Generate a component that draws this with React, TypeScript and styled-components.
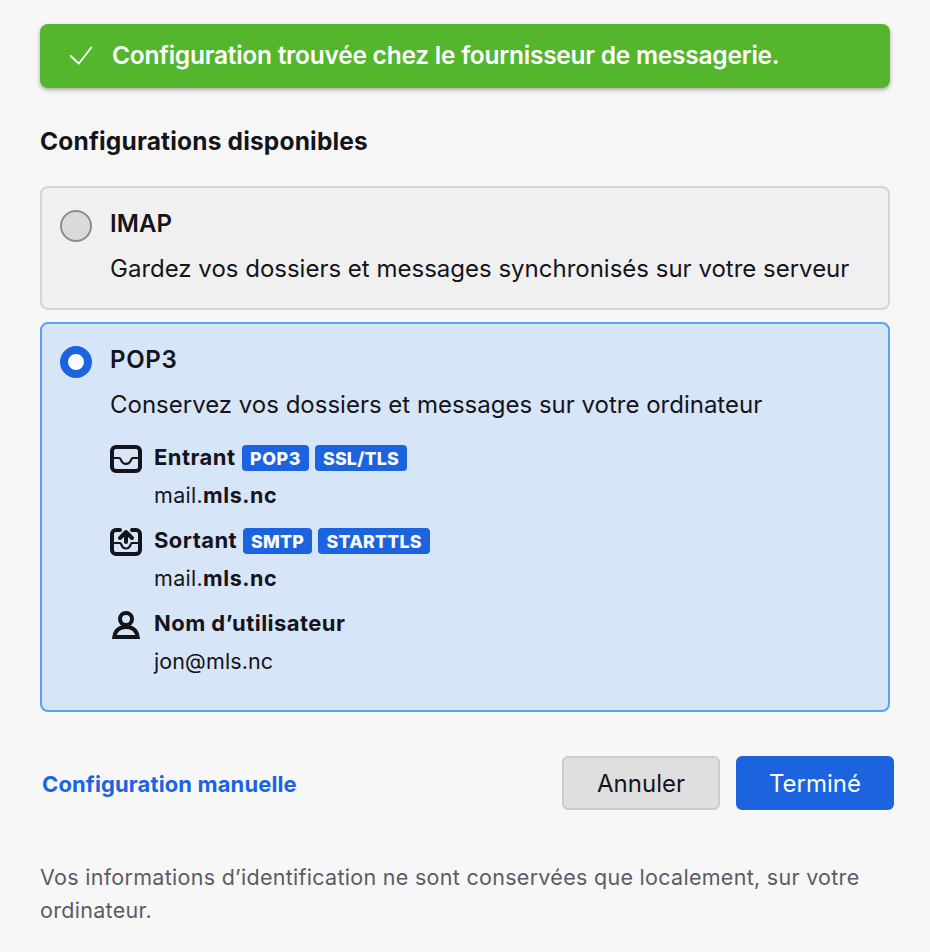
import React from "react";
import styled, { createGlobalStyle } from "styled-components";

const GlobalStyle = createGlobalStyle`
  * { box-sizing: border-box; }
  body {
    margin: 0;
    background: #f7f7f7;
    color: #15141a;
    font-family: Inter, "Liberation Sans", sans-serif;
  }
`;

const Page = styled.main`
  min-height: 952px;
  padding: 24px 36px 0 40px;
  overflow: hidden;
`;

const Notice = styled.div`
  display: flex;
  align-items: center;
  width: 850px;
  height: 64px;
  padding: 0 28px 2px;
  gap: 17px;
  border-radius: 8px;
  background: #54b62d;
  color: #fff;
  box-shadow: 0 2px 4px rgba(0, 0, 0, 0.32);
  font-size: 24.5px;
  font-weight: 600;
  line-height: 30px;
  letter-spacing: -0.24px;
  white-space: nowrap;
`;

const NoticeIcon = styled.svg`
  flex: none;
  width: 27px;
  height: 27px;
`;

const Heading = styled.h1`
  margin: 36px 0 27px;
  font-size: 24.5px;
  font-weight: 700;
  line-height: 35px;
  letter-spacing: 0.17px;
`;

const OptionList = styled.div`
  display: flex;
  flex-direction: column;
  gap: 12px;
  width: 850px;
`;

const Option = styled.section<{ $selected?: boolean }>`
  display: flex;
  gap: 18px;
  height: ${(p) => (p.$selected ? 390 : 124)}px;
  padding: 13px 18px;
  border: 2px solid ${(p) => (p.$selected ? "#56a2fb" : "#d4d4da")};
  border-radius: 8px;
  background: ${(p) => (p.$selected ? "#d7e5f8" : "#f0f0f0")};
`;

const Radio = styled.span<{ $checked?: boolean }>`
  flex: none;
  width: 32px;
  height: 32px;
  margin-top: 9px;
  border-radius: 50%;
  border: ${(p) => (p.$checked ? "8px solid #1c64df" : "2px solid #8c8c8c")};
  background: ${(p) => (p.$checked ? "#fbfbfe" : "#dadada")};
`;

const OptionTitle = styled.h2<{ $tracking?: number }>`
  margin: 0;
  font-size: 24px;
  font-weight: 600;
  line-height: 45px;
  letter-spacing: ${(p) => p.$tracking ?? 0.1}px;
`;

const OptionText = styled.p`
  margin: 0;
  font-size: 24px;
  line-height: 45px;
  white-space: nowrap;
`;

const Details = styled.dl`
  display: grid;
  gap: 7px;
  margin: 11px 0 0;
`;

const Detail = styled.div`
  display: grid;
  grid-template-columns: 32px auto;
  column-gap: 12px;
  grid-template-rows: 38px 38px;
  align-items: center;
  justify-content: start;
`;

const DetailIcon = styled.svg`
  width: 32px;
  height: 32px;
  margin-top: 3px;
  color: #15141a;
`;

const DetailTitle = styled.dt`
  display: flex;
  align-items: center;
  gap: 6px;
  font-size: 22px;
  font-weight: 700;
  line-height: 38px;
  letter-spacing: 0.45px;
`;

const DetailLabel = styled.span`
  min-width: 82px;
`;

const DetailValue = styled.dd`
  grid-column: 2;
  margin: 0;
  font-size: 21.5px;
  line-height: 38px;
  letter-spacing: 0.1px;
`;

const Domain = styled.strong`
  font-weight: 700;
  letter-spacing: 0.6px;
`;

const Server = styled.span`
  letter-spacing: 0.3px;
`;

const Badge = styled.span<{ $width: number; $tracking: number }>`
  width: ${(p) => p.$width}px;
  height: 26px;
  margin-top: 1px;
  border-radius: 4px;
  background: #1c64df;
  color: #fbfbfe;
  font-size: 17.8px;
  font-weight: 800;
  line-height: 27px;
  text-align: center;
  letter-spacing: ${(p) => p.$tracking}px;
`;

const Footer = styled.footer`
  display: flex;
  align-items: center;
  gap: 16px;
  margin-top: 44px;
`;

const ManualLink = styled.a`
  margin: 2px auto 0 2px;
  color: #1c64df;
  font-size: 22px;
  font-weight: 650;
  letter-spacing: 0.12px;
`;

const Button = styled.button<{ $primary?: boolean }>`
  width: 158px;
  height: 54px;
  padding: 0;
  border: 2px solid ${(p) => (p.$primary ? "#1c64df" : "#cbcbcb")};
  border-radius: 6px;
  background: ${(p) => (p.$primary ? "#1c64df" : "#dfdfdf")};
  color: ${(p) => (p.$primary ? "#fbfbfe" : "#15141a")};
  font-family: inherit;
  font-size: 24px;
  letter-spacing: 0;
`;

const Privacy = styled.p`
  width: 850px;
  margin: 51px 0 0;
  color: #5b5b66;
  font-size: 21.5px;
  line-height: 33px;
  letter-spacing: 0.29px;
`;

const InboxIcon = () => (
  <DetailIcon viewBox="0 0 32 32" fill="none" stroke="currentColor">
    <rect x="2" y="4" width="28" height="24" rx="4" strokeWidth="4" />
    <path d="M2 15h7.500c2 0 .8 5.800 6.500 5.800s4.500-5.800 6.500-5.800H30" strokeWidth="2.200" />
  </DetailIcon>
);

const OutboxIcon = () => (
  <DetailIcon viewBox="0 0 32 32" fill="none" stroke="currentColor">
    <path
      d="M10 4H6a4 4 0 0 0-4 4v16a4 4 0 0 0 4 4h20a4 4 0 0 0 4-4V8a4 4 0 0 0-4-4H22"
      strokeWidth="4"
      strokeLinecap="round"
    />
    <path d="M2 17h8c1.800 0 .8 5.500 6 5.500s4.200-5.500 6-5.500h8" strokeWidth="2.200" />
    <path d="M16 16V6M10 12l6-6 6 6" strokeWidth="4" strokeLinecap="round" strokeLinejoin="round" />
  </DetailIcon>
);

const UserIcon = () => (
  <DetailIcon viewBox="0 0 32 32" fill="none" stroke="currentColor" strokeWidth="4">
    <circle cx="16" cy="10" r="6" />
    <path d="M4.300 28C5.300 21.500 9.500 18 16 18S26.700 21.500 27.700 28Z" />
  </DetailIcon>
);

export default function App() {
  return (
    <>
      <GlobalStyle />
      <Page>
        <Notice>
          <NoticeIcon viewBox="0 0 27 27" fill="none" stroke="currentColor" strokeWidth="1.800">
            <path d="M2.800 14L10.700 21.700L23.300 5.500" strokeLinecap="round" strokeLinejoin="round" />
          </NoticeIcon>
          Configuration trouvée chez le fournisseur de messagerie.
        </Notice>
        <Heading>Configurations disponibles</Heading>
        <OptionList>
          <Option>
            <Radio />
            <div>
              <OptionTitle>IMAP</OptionTitle>
              <OptionText>Gardez vos dossiers et messages synchronisés sur votre serveur</OptionText>
            </div>
          </Option>
          <Option $selected>
            <Radio $checked />
            <div>
              <OptionTitle $tracking={0.7}>POP3</OptionTitle>
              <OptionText>Conservez vos dossiers et messages sur votre ordinateur</OptionText>
              <Details>
                <Detail>
                  <InboxIcon />
                  <DetailTitle>
                    <DetailLabel>Entrant</DetailLabel>
                    <Badge $width={67} $tracking={0.6}>POP3</Badge>
                    <Badge $width={92} $tracking={0.25}>SSL/TLS</Badge>
                  </DetailTitle>
                  <DetailValue><Server>mail.</Server><Domain>mls.nc</Domain></DetailValue>
                </Detail>
                <Detail>
                  <OutboxIcon />
                  <DetailTitle>
                    <DetailLabel>Sortant</DetailLabel>
                    <Badge $width={69} $tracking={0.25}>SMTP</Badge>
                    <Badge $width={112} $tracking={0.2}>STARTTLS</Badge>
                  </DetailTitle>
                  <DetailValue><Server>mail.</Server><Domain>mls.nc</Domain></DetailValue>
                </Detail>
                <Detail>
                  <UserIcon />
                  <DetailTitle>Nom d’utilisateur</DetailTitle>
                  <DetailValue>jon@mls.nc</DetailValue>
                </Detail>
              </Details>
            </div>
          </Option>
        </OptionList>
        <Footer>
          <ManualLink>Configuration manuelle</ManualLink>
          <Button>Annuler</Button>
          <Button $primary>Terminé</Button>
        </Footer>
        <Privacy>
          Vos informations d’identification ne sont conservées que localement, sur votre ordinateur.
        </Privacy>
      </Page>
    </>
  );
}
